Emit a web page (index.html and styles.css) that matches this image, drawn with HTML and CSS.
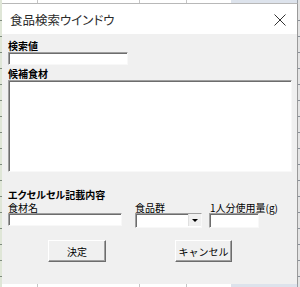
FILE: index.html
```html
<!DOCTYPE html>
<html lang="ja">
<head>
    <meta charset="utf-8">
    <title>食品検索ウインドウ</title>
    <link rel="stylesheet" href="styles.css">
</head>
<body>
    <div class="window">
        <div class="titlebar">
            <span class="title">食品検索ウインドウ</span>
            <svg class="close" width="12" height="12" viewBox="0 0 12 12">
                <path d="M0.5 0.5 L11.5 11.5 M11.5 0.5 L0.5 11.5" stroke="#333" stroke-width="1" fill="none"/>
            </svg>
        </div>
        <div class="content">
            <div class="label bold">検索値</div>
            <div class="field search"></div>
            <div class="label bold">候補食材</div>
            <div class="field listbox"></div>
            <div class="label bold section">エクセルセル記載内容</div>
            <div class="fields">
                <div class="group name">
                    <div class="label">食材名</div>
                    <div class="field"></div>
                </div>
                <div class="group group-kind">
                    <div class="label">食品群</div>
                    <div class="field combo"><span class="drop"></span></div>
                </div>
                <div class="group amount">
                    <div class="label">1人分使用量(g)</div>
                    <div class="field"></div>
                </div>
            </div>
            <div class="buttons">
                <button class="btn ok">決定</button>
                <button class="btn cancel">キャンセル</button>
            </div>
        </div>
    </div>
</body>
</html>
```

FILE: styles.css
```css
body {
    margin: 0;
    width: 300px;
    height: 287px;
    box-sizing: border-box;
    padding: 3px 2px 4px 2px;
    font-family: "Noto Sans CJK JP", "Noto Sans", sans-serif;
    font-feature-settings: "palt";
    background-color: #ffffff;
    background-image:
        repeating-linear-gradient(to bottom, transparent 0 15px, #7f8c7f 15px 16px),
        repeating-linear-gradient(to bottom, transparent 0 15px, #8a9098 15px 16px),
        linear-gradient(to right, #dfe6d7 0 2px, transparent 2px),
        linear-gradient(to right, transparent 37px, #c6c6c6 37px 38px, transparent 38px,
            transparent 139px, #c6c6c6 139px 140px, transparent 140px,
            transparent 186px, #c6c6c6 186px 187px, transparent 187px,
            transparent 231px, #dde3ec 231px 297px, #9aa0a8 297px 298px, #e4e4e4 298px);
    background-size: 2px 100%, 2px 100%, 100% 100%, 100% 100%;
    background-position: 0 5px, 298px 5px, 0 0, 0 0;
    background-repeat: no-repeat;
}

.window {
    height: 100%;
    display: flex;
    flex-direction: column;
    background: #f0f0f0;
    border-top: 1px solid #b8b8b8;
    border-right: 1px solid #9a9a9a;
}

.titlebar {
    height: 30px;
    background: #ffffff;
    display: flex;
    align-items: center;
    justify-content: space-between;
    padding: 0 11px 0 8px;
}

.title {
    font-size: 12.5px;
    color: #2b2b2b;
    padding-top: 1px;
}

.close {
    display: block;
    margin-top: 1px;
}

.content {
    flex: 1;
    padding: 5px 0 0 6px;
    font-size: 10px;
    color: #000;
}

.label {
    line-height: 13px;
    height: 13px;
    white-space: nowrap;
}

.bold {
    font-weight: bold;
}

.field {
    box-sizing: border-box;
    background: #ffffff;
    border: 1px solid;
    border-color: #a0a0a0 #f8f8f8 #f8f8f8 #a0a0a0;
    box-shadow: inset 1px 1px 0 #6d6d6d;
}

.search {
    width: 120px;
    height: 13px;
    margin-bottom: 2px;
}

.listbox {
    width: 284px;
    height: 92px;
}

.section {
    margin-top: 17px;
    line-height: 12px;
    height: 12px;
}

.fields {
    display: flex;
    align-items: flex-start;
}

.group .label {
    margin-top: 1px;
    line-height: 11px;
    height: 11px;
}

.name .field {
    width: 114px;
    height: 13px;
}

.group-kind {
    margin-left: 13px;
}

.combo {
    width: 67px;
    height: 15px;
    position: relative;
}

.drop {
    position: absolute;
    right: 0;
    top: 0;
    width: 12px;
    height: 12px;
    background: #f0f0f0;
    border-left: 1px solid #e0e0e0;
    display: flex;
    align-items: center;
    justify-content: center;
}

.drop::after {
    content: "";
    border-left: 3px solid transparent;
    border-right: 3px solid transparent;
    border-top: 3px solid #000;
    margin-top: 1px;
}

.amount {
    margin-left: 7px;
}

.amount .label {
    padding-left: 1px;
}

.amount .field {
    width: 50px;
    height: 15px;
}

.buttons {
    display: flex;
    margin-top: 12px;
    padding-left: 40px;
}

.btn {
    height: 22px;
    margin: 0;
    padding: 0;
    background: #f0f0f0;
    font-family: inherit;
    font-size: 10px;
    color: #000;
    border: 1px solid;
    border-color: #ffffff #6d6d6d #6d6d6d #ffffff;
    box-shadow: inset -1px -1px 0 #a0a0a0;
}

.ok {
    width: 58px;
}

.cancel {
    width: 57px;
    margin-left: 69px;
}
```
